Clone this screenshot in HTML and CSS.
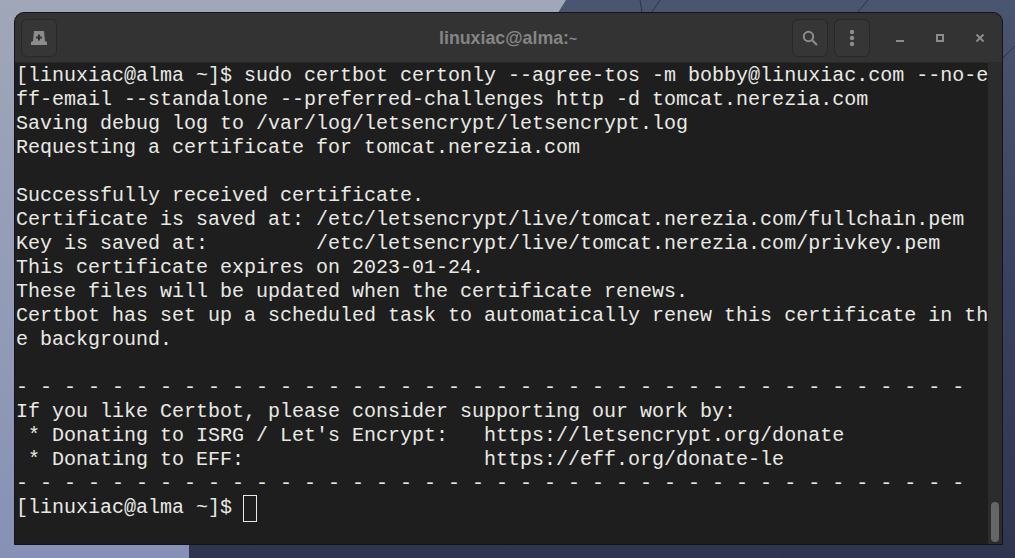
FILE: index.html
```html
<!DOCTYPE html>
<html lang="en">
<head>
<meta charset="utf-8">
<title>linuxiac@alma:~</title>
<link rel="stylesheet" href="styles.css">
</head>
<body>
<svg class="wallpaper" viewBox="0 0 1015 558" aria-hidden="true">
  <defs>
    <linearGradient id="dark" x1="0" y1="0" x2="0" y2="1">
      <stop offset="0" stop-color="#4a556f"/>
      <stop offset="0.5" stop-color="#3a4160"/>
      <stop offset="1" stop-color="#30354f"/>
    </linearGradient>
    <linearGradient id="light" x1="0" y1="0" x2="0" y2="1">
      <stop offset="0" stop-color="#a0a7b8"/>
      <stop offset="1" stop-color="#8791b5"/>
    </linearGradient>
  </defs>
  <rect width="1015" height="558" fill="url(#dark)"/>
  <polygon points="0,0 566,0 556,16 189,540 189,558 0,558" fill="url(#light)"/>
  <g stroke="#2d344a" stroke-width="1" fill="none">
    <path d="M640 0 L642 12"/>
    <path d="M660 0 L652 12"/>
    <path d="M868 0 L858 12"/>
    <path d="M1003 58 L1015 46"/>
    <path d="M383 546 L374 558"/>
    <path d="M662 546 L650 558"/>
    <path d="M780 546 L784 558"/>
  </g>
</svg>
<main class="window">
  <header class="titlebar">
    <button class="hb" type="button" aria-label="New tab">
      <svg width="16" height="14" viewBox="0 0 16 14"><path d="M3 0h10l1 10 2 1v3H0v-3l2-1z" fill="#8c8c8c"/><path d="M7 3.500h2v2h2v2H9v2H7v-2H5v-2h2z" fill="#333"/></svg>
    </button>
    <h1 class="title">linuxiac@alma:<span class="tilde">~</span></h1>
    <div class="actions">
      <button class="hb" type="button" aria-label="Search">
        <svg width="16" height="16" viewBox="0 0 16 16"><circle cx="6.500" cy="6.500" r="4.700" fill="none" stroke="#8c8c8c" stroke-width="2"/><path d="M10 10l5 5" stroke="#8c8c8c" stroke-width="2.200" fill="none"/></svg>
      </button>
      <button class="hb" type="button" aria-label="Menu">
        <svg width="6" height="18" viewBox="0 0 6 18"><circle cx="3" cy="3" r="2.200" fill="#8c8c8c"/><circle cx="3" cy="9" r="2.200" fill="#8c8c8c"/><circle cx="3" cy="15" r="2.200" fill="#8c8c8c"/></svg>
      </button>
    </div>
    <div class="controls">
      <button class="wc" type="button" aria-label="Minimize"><svg width="8" height="8" viewBox="0 0 8 8"><rect y="6" width="8" height="2" fill="#8c8c8c"/></svg></button>
      <button class="wc" type="button" aria-label="Maximize"><svg width="8" height="8" viewBox="0 0 8 8"><rect x="1" y="1" width="6" height="6" fill="none" stroke="#8c8c8c" stroke-width="2"/></svg></button>
      <button class="wc" type="button" aria-label="Close"><svg width="8" height="8" viewBox="0 0 8 8"><path d="M0.500 0.500l7 7M7.500 0.500l-7 7" stroke="#8c8c8c" stroke-width="2" fill="none"/></svg></button>
    </div>
  </header>
  <div class="body">
    <pre class="term">[linuxiac@alma ~]$ sudo certbot certonly --agree-tos -m bobby@linuxiac.com --no-e
ff-email --standalone --preferred-challenges http -d tomcat.nerezia.com
Saving debug log to /var/log/letsencrypt/letsencrypt.log
Requesting a certificate for tomcat.nerezia.com

Successfully received certificate.
Certificate is saved at: /etc/letsencrypt/live/tomcat.nerezia.com/fullchain.pem
Key is saved at:         /etc/letsencrypt/live/tomcat.nerezia.com/privkey.pem
This certificate expires on 2023-01-24.
These files will be updated when the certificate renews.
Certbot has set up a scheduled task to automatically renew this certificate in th
e background.

- - - - - - - - - - - - - - - - - - - - - - - - - - - - - - - - - - - - - - - -
If you like Certbot, please consider supporting our work by:
 * Donating to ISRG / Let's Encrypt:   https://letsencrypt.org/donate
 * Donating to EFF:                    https://eff.org/donate-le
- - - - - - - - - - - - - - - - - - - - - - - - - - - - - - - - - - - - - - - -
[linuxiac@alma ~]$ <span class="cursor"></span></pre>
    <div class="scrollbar"><div class="thumb"></div></div>
  </div>
</main>
</body>
</html>
```

FILE: styles.css
```css
html, body {
  margin: 0;
  height: 100%;
  overflow: hidden;
}
body {
  position: relative;
  width: 1015px;
  height: 558px;
  padding: 12px 12px 13px 14px;
  box-sizing: border-box;
}
.wallpaper {
  position: absolute;
  inset: 0;
  width: 1015px;
  height: 558px;
}
.window {
  position: relative;
  width: 989px;
  height: 533px;
  box-sizing: border-box;
  border: 1px solid #12141a;
  border-radius: 10px 10px 0 0;
  overflow: hidden;
  display: flex;
  flex-direction: column;
  background: #1e1e1e;
}
.titlebar {
  position: relative;
  flex: 0 0 49px;
  display: flex;
  align-items: center;
  padding: 0 0 0 6px;
  background: #333333;
  border-bottom: 1px solid #2a2a2a;
  box-sizing: content-box;
}
.hb {
  width: 36px;
  height: 38px;
  padding: 0;
  box-sizing: border-box;
  display: flex;
  align-items: center;
  justify-content: center;
  background: #363636;
  border: 1px solid #282828;
  border-radius: 6px;
}
.title {
  position: absolute;
  left: 424px;
  top: 0;
  margin: 0;
  font: bold 17.8px/50px "Liberation Sans", Arial, sans-serif;
  color: #858585;
  white-space: nowrap;
}
.tilde {
  font-size: 14px;
}
.actions {
  margin-left: auto;
  display: flex;
  gap: 6px;
}
.controls {
  display: flex;
  margin-left: 10px;
  margin-right: 2px;
}
.wc {
  width: 40px;
  height: 38px;
  padding: 0;
  display: flex;
  align-items: center;
  justify-content: center;
  background: none;
  border: 0;
}
.body {
  flex: 1;
  min-height: 0;
  display: flex;
}
.term {
  flex: 1;
  margin: 0;
  padding: 1px 0 0 1px;
  overflow: hidden;
  font: 20px/24px "Liberation Mono", "Courier New", monospace;
  color: #e9e9e4;
  background: #1e1e1e;
}
.cursor {
  display: inline-block;
  width: 12px;
  height: 25px;
  margin-right: 1px;
  vertical-align: top;
  outline: 1px solid #e9e9e4;
  outline-offset: 0;
}
.scrollbar {
  flex: 0 0 14px;
  position: relative;
  background: #2c2c2c;
}
.thumb {
  position: absolute;
  left: 3px;
  bottom: 2px;
  width: 8px;
  height: 40px;
  border-radius: 4px;
  background: #666666;
}
```
